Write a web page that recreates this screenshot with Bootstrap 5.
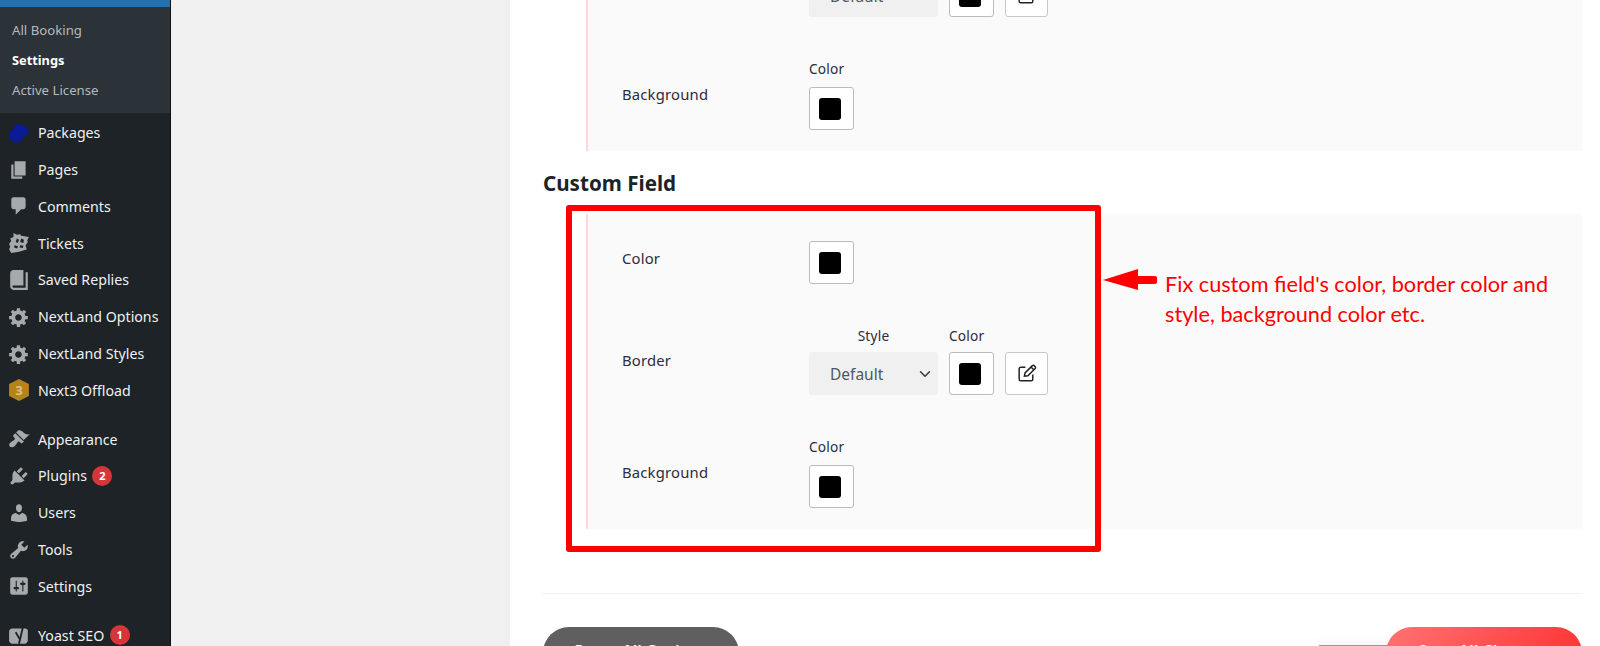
<!DOCTYPE html>
<html lang="en">
<head>
    <meta charset="UTF-8">
    <title>Settings</title>
    <link href="https://cdn.jsdelivr.net/npm/bootstrap@5.3.2/dist/css/bootstrap.min.css" rel="stylesheet">
    <style>
        html, body { height: 646px; overflow: hidden; }
        body { font-family: "Noto Sans", "Open Sans", sans-serif; background: #f0f0f0; color: #2c2c3a; }

        .wp-side { width: 171px; height: 646px; background: #1d2327; border-right: 1px solid #111; flex-shrink: 0; overflow: hidden; }
        .side-top { height: 7px; background: #2271b1; }
        .side-sub { height: 106px; background: #2c3338; padding-top: 8px; }
        .side-sub a { display: block; height: 30px; line-height: 30px; padding-left: 12px; font-size: 13.200px; color: #b5b9bd; text-decoration: none; }
        .side-sub a.on { color: #fff; font-weight: 700; font-size: 12.800px; }
        .side-list { padding-top: 1.500px; }
        .side-item { height: 36.800px; color: #f0f0f1; font-size: 14.200px; text-decoration: none; padding-left: 8px; }
        .side-item svg { width: 22px; height: 22px; fill: #a7aaad; margin-right: 8px; flex-shrink: 0; }
        .side-gap { height: 12px; }
        .side-count { width: 20px; height: 20px; line-height: 20px; border-radius: 50%; background: #d63638; color: #fff; font-size: 11px; font-weight: 700; text-align: center; margin-left: 5.500px; }

        .page-blank { width: 339px; flex-shrink: 0; }
        .page-sheet { background: #fff; padding: 0 18px 0 33px; height: 646px; overflow: hidden; position: relative; }
        .opt-panel { margin-left: 43px; background: #fafafa; border-left: 2px solid #ffd5d5; padding: 0 0 21px 34px; position: relative; }
        .opt-panel.cut-top { margin-top: -51px; }
        .opt-panel.pad-top { padding-top: 27px; }
        .opt-row + .opt-row { margin-top: 43px; }
        .opt-name { width: 187px; font-size: 14.800px; flex-shrink: 0; letter-spacing: .2px; padding-bottom: 2px; }
        .opt-name.lift { padding-bottom: 8px; }
        .opt-cap { font-size: 13.700px; line-height: 18px; margin-bottom: 7px; letter-spacing: .2px; }
        .opt-cap.wide { margin-bottom: 9px; }
        .opt-gap { gap: 11px; }
        .opt-swatch { width: 45px; height: 43px; background: #fff; border: 1px solid #bbb; border-radius: 3px; padding-right: 3px; }
        .opt-swatch span { display: block; width: 22px; height: 22px; background: #000; border-radius: 3px; }
        .opt-edit { width: 43px; height: 43px; background: #fff; border: 1px solid #c8c8c8; border-radius: 3px; }
        .opt-edit svg { width: 21px; height: 21px; fill: none; stroke: #222; stroke-width: 1.400; }
        .opt-select { width: 129px; height: 43px; background-color: #f0f0f0; border: 0; border-radius: 3px; padding: 3px 0 0 21px; font-size: 15.500px; color: #50575e; background-position: right 5px center; }
        .opt-title { font-size: 20.600px; font-weight: 700; color: #1d2327; line-height: 27px; margin: 19px 0 17px; }
        .page-rule { margin: 64px 0 33px; border-top: 1px solid #f1f1ea; opacity: 1; }
        .act-btn { width: 196px; height: 56px; border: 0; border-radius: 26px; color: #fff; font-size: 16px; font-weight: 600; padding: 0 0 8px; }
        .act-reset { background: #5f5f5f; }
        .act-save { background: linear-gradient(120deg, #ff7272, #ff3030); position: relative; z-index: 1; }

        .mark-box { position: absolute; left: -22px; top: -9px; width: 535px; height: 347px; border: 6px solid #f00; border-radius: 3px; z-index: 2; }
        .mark-arrow { position: absolute; left: 515px; top: 54px; width: 54px; height: 22px; z-index: 2; fill: #f00; }
        .mark-note { position: absolute; left: 577px; top: 55px; width: 400px; font-family: Lato, "Noto Sans", sans-serif; font-size: 21.700px; line-height: 30px; color: #f00; z-index: 2; }
        .float-bar { position: absolute; left: 809px; top: 645px; width: 90px; height: 1px; background: #9a9a9a; box-shadow: 0 0 10px rgba(0,0,0,.35); }
    </style>
</head>
<body class="d-flex">

<aside class="wp-side">
    <div class="side-top"></div>
    <div class="side-sub">
        <a href="#">All Booking</a>
        <a href="#" class="on">Settings</a>
        <a href="#">Active License</a>
    </div>
    <nav class="d-flex flex-column side-list">
        <a class="side-item d-flex align-items-center" href="#"><svg viewBox="0 0 20 20"><circle style="fill:#0b1a96" cx="7.500" cy="12" r="6.500"/><ellipse style="fill:#0b1a96" cx="12" cy="7" rx="7" ry="4.500" transform="rotate(30 12 7)"/></svg>Packages</a>
        <a class="side-item d-flex align-items-center" href="#"><svg viewBox="0 0 20 20"><path d="M6 15V2h10v13H6zm-1 1h8v2H3V5h2v11z"/></svg>Pages</a>
        <a class="side-item d-flex align-items-center" href="#"><svg viewBox="0 0 20 20"><path d="M5 2h9c1.100 0 2 .9 2 2v7c0 1.100-.9 2-2 2h-2l-5 5v-5H5c-1.100 0-2-.9-2-2V4c0-1.100.9-2 2-2z"/></svg>Comments</a>
        <a class="side-item d-flex align-items-center" href="#"><svg viewBox="0 0 20 20"><path fill-rule="evenodd" d="M5 1l3 1.500 3-.5 1 1.500 7 1-1.500 3L18 9l-2 3 1 4-7 2-7 1-2-3 1-2.500L1 11l2-3-1-2 3-1.500V1zm3 5l-1 3 2 1 1-3-2-1zm4 0l-1 3 3 1 .5-3-2.500-1zm-6 6l-.5 2 3 1 .5-2-3-1zm5 0l-.5 2 3 .5.5-2-3-.5z"/></svg>Tickets</a>
        <a class="side-item d-flex align-items-center" href="#"><svg viewBox="0 0 20 20"><path d="M16 3h2v16H5c-1.660 0-3-1.340-3-3V4c0-1.660 1.340-3 3-3h9v14H5c-.55 0-1 .45-1 1s.45 1 1 1h11V3z"/></svg>Saved Replies</a>
        <a class="side-item d-flex align-items-center" href="#"><svg viewBox="0 0 20 20"><path d="M18 12h-2.180c-.17.7-.44 1.350-.81 1.930l1.540 1.540-2.100 2.100-1.540-1.540c-.58.36-1.230.63-1.910.79V19H8v-2.180c-.68-.16-1.330-.43-1.910-.79l-1.540 1.540-2.120-2.120 1.540-1.540c-.36-.58-.63-1.230-.79-1.910H1V9.030h2.170c.16-.7.44-1.350.8-1.940L2.430 5.550l2.100-2.100 1.540 1.540c.58-.37 1.240-.64 1.930-.81V2h3v2.180c.68.16 1.330.43 1.910.79l1.540-1.540 2.120 2.120-1.540 1.540c.36.59.64 1.240.8 1.940H18V12zm-8.500 1.500c1.660 0 3-1.340 3-3s-1.340-3-3-3-3 1.340-3 3 1.340 3 3 3z"/></svg>NextLand Options</a>
        <a class="side-item d-flex align-items-center" href="#"><svg viewBox="0 0 20 20"><path d="M18 12h-2.180c-.17.7-.44 1.350-.81 1.930l1.540 1.540-2.100 2.100-1.540-1.540c-.58.36-1.230.63-1.910.79V19H8v-2.180c-.68-.16-1.330-.43-1.910-.79l-1.540 1.540-2.120-2.120 1.540-1.540c-.36-.58-.63-1.230-.79-1.910H1V9.030h2.170c.16-.7.44-1.350.8-1.940L2.430 5.550l2.100-2.100 1.540 1.540c.58-.37 1.240-.64 1.930-.81V2h3v2.180c.68.16 1.330.43 1.910.79l1.540-1.540 2.120 2.120-1.540 1.540c.36.59.64 1.240.8 1.940H18V12zm-8.500 1.500c1.660 0 3-1.340 3-3s-1.340-3-3-3-3 1.340-3 3 1.340 3 3 3z"/></svg>NextLand Styles</a>
        <a class="side-item d-flex align-items-center" href="#"><svg viewBox="0 0 20 20"><path style="fill:#b5831c" d="M10 0l9 4.500v11L10 20l-9-4.500v-11z"/><text x="10" y="14.500" text-anchor="middle" font-size="12" font-weight="700" style="fill:#e0c07c">3</text></svg>Next3 Offload</a>
        <div class="side-gap"></div>
        <a class="side-item d-flex align-items-center" href="#"><svg viewBox="0 0 20 20"><path d="M14.480 11.060L7.410 3.990l1.500-1.500c.5-.56 2.300-.47 3.510.32 1.210.8 1.430 1.280 2.910 2.100 1.180.64 2.450 1.260 4.450.85l-5.800 5.300zm-.71.71L6.700 4.700 4.930 6.470c-.39.39-.39 1.020 0 1.410l1.060 1.060c.39.39.39 1.030 0 1.420-.6.600-1.430 1.110-2.210 1.690-.35.26-.7.53-1.010.84C1.430 13.230.91 14.400 1.230 16.110c.1.600.6 1.100 1.300 1.200 1.600.3 2.800-.2 4.100-1.500.3-.3.6-.7.8-1 .6-.8 1.100-1.600 1.700-2.200.4-.4 1-.4 1.400 0l1.060 1.060c.39.39 1.020.39 1.410 0l1.770-1.900z"/></svg>Appearance</a>
        <a class="side-item d-flex align-items-center" href="#"><svg viewBox="0 0 20 20"><path d="M13.110 4.360L9.870 7.600 8 5.730l3.240-3.240c.35-.34 1.050-.2 1.560.32.52.51.66 1.210.31 1.550zm-8 1.770l.91-1.120 9.010 9.010-1.190.84c-.71.71-2.630 1.160-3.820 1.160H6.140L4.900 17.260c-.59.59-1.540.59-2.120 0-.59-.58-.59-1.530 0-2.120l1.240-1.240v-3.880c0-1.130.4-3.190 1.090-3.890zm7.260 3.970l3.240-3.240c.34-.35 1.040-.21 1.550.31.52.51.66 1.210.31 1.550l-3.240 3.250z"/></svg>Plugins<span class="side-count">2</span></a>
        <a class="side-item d-flex align-items-center" href="#"><svg viewBox="0 0 20 20"><path d="M10 9.250c-2.270 0-2.730-3.440-2.730-3.440C7 4.020 7.820 2 9.970 2c2.160 0 2.980 2.020 2.710 3.810 0 0-.41 3.440-2.680 3.440zm0 2.570L12.720 10c2.390 0 4.520 2.330 4.520 4.530v2.490s-3.650 1.130-7.240 1.130c-3.650 0-7.240-1.130-7.240-1.130v-2.490c0-2.250 1.940-4.480 4.470-4.480z"/></svg>Users</a>
        <a class="side-item d-flex align-items-center" href="#"><svg viewBox="0 0 20 20"><path d="M16.680 9.770c-1.340 1.340-3.300 1.670-4.950.99l-5.410 6.520c-.99.99-2.590.99-3.580 0s-.99-2.590 0-3.570l6.520-5.420c-.68-1.650-.35-3.610.99-4.950 1.280-1.280 3.120-1.620 4.720-1.060l-2.890 2.890 2.820 2.820 2.860-2.870c.53 1.580.18 3.390-1.080 4.650zM3.810 16.210c.4.39 1.040.39 1.430 0 .4-.4.4-1.040 0-1.430-.39-.4-1.030-.4-1.430 0-.39.39-.39 1.030 0 1.430z"/></svg>Tools</a>
        <a class="side-item d-flex align-items-center" href="#"><svg viewBox="0 0 20 20"><path d="M18 16V4c0-1.100-.9-2-2-2H4c-1.100 0-2 .9-2 2v12c0 1.100.9 2 2 2h12c1.100 0 2-.9 2-2zM8 11h1c.55 0 1 .45 1 1s-.45 1-1 1H8v1.500c0 .28-.22.5-.5.5s-.5-.22-.5-.5V13H6c-.55 0-1-.45-1-1s.45-1 1-1h1V5.500c0-.28.22-.5.5-.5s.5.22.5.5V11zm5-2h-1c-.55 0-1-.45-1-1s.45-1 1-1h1V5.500c0-.28.22-.5.5-.5s.5.22.5.5V7h1c.55 0 1 .45 1 1s-.45 1-1 1h-1v5.500c0 .28-.22.5-.5.5s-.5-.22-.5-.5V9z"/></svg>Settings</a>
        <div class="side-gap"></div>
        <a class="side-item d-flex align-items-center" href="#"><svg viewBox="0 0 20 20"><path d="M4 4h12c1 0 2 1 2 2v9c0 1-1 3-3 3H4c-1.500 0-3-1.500-3-3V7c0-2 1.500-3 3-3z"/><path fill="none" stroke="#1d2327" stroke-width="1.700" d="M7 7.500l3.500 6M14 1l-4 17"/></svg>Yoast SEO<span class="side-count">1</span></a>
    </nav>
</aside>

<div class="page-blank"></div>

<main class="page-sheet flex-grow-1">
    <div class="opt-panel cut-top">
        <div class="opt-row d-flex align-items-center">
            <div class="opt-name">Border</div>
            <div class="d-flex opt-gap">
                <div class="d-flex flex-column align-items-center">
                    <div class="opt-cap">Style</div>
                    <select class="form-select opt-select"><option>Default</option></select>
                </div>
                <div class="d-flex flex-column">
                    <div class="opt-cap">Color</div>
                    <div class="opt-swatch d-flex align-items-center justify-content-center"><span></span></div>
                </div>
                <div class="d-flex align-items-end">
                    <div class="opt-edit d-flex align-items-center justify-content-center"><svg viewBox="0 0 20 20"><path d="M9 4H4.500A1.500 1.500 0 0 0 3 5.500v10A1.500 1.500 0 0 0 4.500 17h10a1.500 1.500 0 0 0 1.500-1.500V11"/><path d="M8 12.500l.6-3 7-7a1.200 1.200 0 0 1 1.700 0l1 1a1.200 1.200 0 0 1 0 1.700l-7 7zM14.300 3.800l2.600 2.700"/></svg></div>
                </div>
            </div>
        </div>
        <div class="opt-row d-flex align-items-center">
            <div class="opt-name">Background</div>
            <div>
                <div class="opt-cap wide">Color</div>
                <div class="opt-swatch d-flex align-items-center justify-content-center"><span></span></div>
            </div>
        </div>
    </div>

    <h2 class="opt-title">Custom Field</h2>

    <div class="opt-panel pad-top">
        <div class="opt-row d-flex align-items-center">
            <div class="opt-name lift">Color</div>
            <div class="opt-swatch d-flex align-items-center justify-content-center"><span></span></div>
        </div>
        <div class="opt-row d-flex align-items-center">
            <div class="opt-name">Border</div>
            <div class="d-flex opt-gap">
                <div class="d-flex flex-column align-items-center">
                    <div class="opt-cap">Style</div>
                    <select class="form-select opt-select"><option>Default</option></select>
                </div>
                <div class="d-flex flex-column">
                    <div class="opt-cap">Color</div>
                    <div class="opt-swatch d-flex align-items-center justify-content-center"><span></span></div>
                </div>
                <div class="d-flex align-items-end">
                    <div class="opt-edit d-flex align-items-center justify-content-center"><svg viewBox="0 0 20 20"><path d="M9 4H4.500A1.500 1.500 0 0 0 3 5.500v10A1.500 1.500 0 0 0 4.500 17h10a1.500 1.500 0 0 0 1.500-1.500V11"/><path d="M8 12.500l.6-3 7-7a1.200 1.200 0 0 1 1.700 0l1 1a1.200 1.200 0 0 1 0 1.700l-7 7zM14.300 3.800l2.600 2.700"/></svg></div>
                </div>
            </div>
        </div>
        <div class="opt-row d-flex align-items-center">
            <div class="opt-name">Background</div>
            <div>
                <div class="opt-cap wide">Color</div>
                <div class="opt-swatch d-flex align-items-center justify-content-center"><span></span></div>
            </div>
        </div>

        <div class="mark-box"></div>
        <svg class="mark-arrow" viewBox="0 0 54 22"><path d="M0 12L35 1v7h16a2.500 2.500 0 0 1 0 8H35v6z"/></svg>
        <div class="mark-note">Fix custom field's color, border color and style, background color etc.</div>
    </div>

    <hr class="page-rule">

    <div class="d-flex justify-content-between">
        <button class="act-btn act-reset" type="button">Reset All Options</button>
        <button class="act-btn act-save" type="button">Save All Changes</button>
    </div>
    <div class="float-bar"></div>
</main>

<script src="https://cdn.jsdelivr.net/npm/bootstrap@5.3.2/dist/js/bootstrap.bundle.min.js"></script>
</body>
</html>
